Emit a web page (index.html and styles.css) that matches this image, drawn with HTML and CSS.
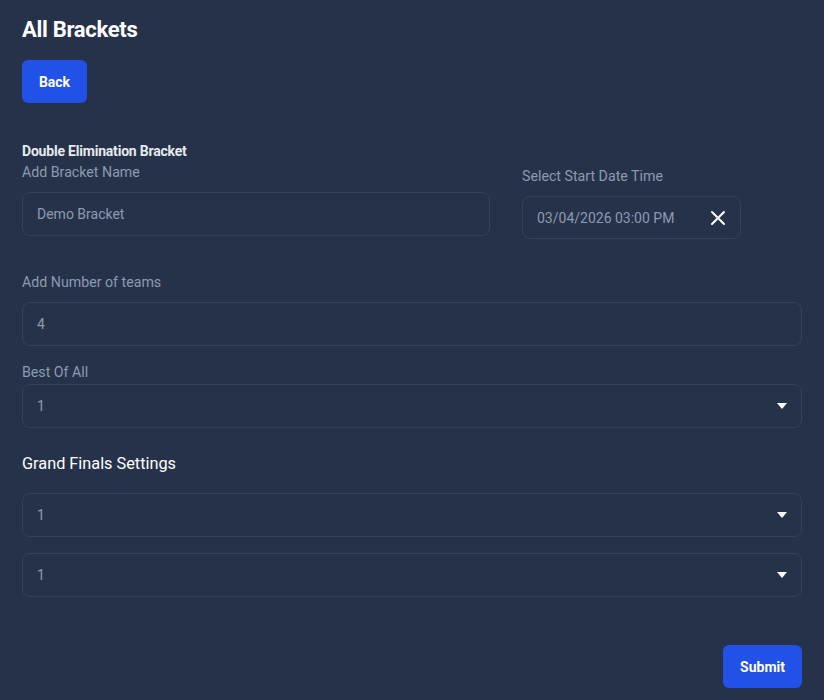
FILE: index.html
```html
<!DOCTYPE html>
<html>
<head>
<meta charset="utf-8">
<link rel="stylesheet" href="styles.css">
</head>
<body>
<div class="page">
  <h1 class="title">All Brackets</h1>
  <button class="btn btn-back">Back</button>

  <div class="row-top">
    <div class="col-left">
      <div class="section-title">Double Elimination Bracket</div>
      <label class="label">Add Bracket Name</label>
      <div class="field">Demo Bracket</div>
    </div>
    <div class="col-right">
      <label class="label">Select Start Date Time</label>
      <div class="field date-field">
        <span>03/04/2026 03:00 PM</span>
        <svg class="clear" width="16" height="16" viewBox="0 0 16 16"><path d="M2 2 L14 14 M14 2 L2 14" stroke="#ffffff" stroke-width="2" stroke-linecap="round"/></svg>
      </div>
    </div>
  </div>

  <div class="group teams">
    <label class="label">Add Number of teams</label>
    <div class="field">4</div>
  </div>

  <div class="group best">
    <label class="label label-tight">Best Of All</label>
    <div class="field select">
      <span>1</span>
      <svg width="10" height="6" viewBox="0 0 10 6"><path d="M0 0 L10 0 L5 6 Z" fill="#ffffff"/></svg>
    </div>
  </div>

  <h2 class="subtitle">Grand Finals Settings</h2>
  <div class="field select gf1">
    <span>1</span>
    <svg width="10" height="6" viewBox="0 0 10 6"><path d="M0 0 L10 0 L5 6 Z" fill="#ffffff"/></svg>
  </div>
  <div class="field select gf2">
    <span>1</span>
    <svg width="10" height="6" viewBox="0 0 10 6"><path d="M0 0 L10 0 L5 6 Z" fill="#ffffff"/></svg>
  </div>

  <div class="actions">
    <button class="btn btn-submit">Submit</button>
  </div>
</div>
</body>
</html>
```
FILE: styles.css
```css
* { box-sizing: border-box; }
html, body {
  margin: 0;
  padding: 0;
  background: #253249;
  font-family: Roboto, "Liberation Sans", sans-serif;
  height: 100%;
}
.page {
  padding: 16px 22px 12px 22px;
}
.title {
  margin: 0;
  font-size: 22px;
  font-weight: 700;
  color: #ffffff;
  line-height: 28px;
  letter-spacing: -0.3px;
}
.btn {
  border: none;
  background: #2151e6;
  color: #ffffff;
  font-family: Roboto, "Liberation Sans", sans-serif;
  font-weight: 700;
  font-size: 14px;
  border-radius: 6px;
  height: 43px;
  padding: 0 16px;
}
.btn-back {
  margin-top: 16px;
  width: 65px;
  display: block;
}
.row-top {
  display: flex;
  align-items: flex-end;
  gap: 32px;
  margin-top: 39px;
}
.col-left { width: 468px; }
.col-right { flex: 1; margin-bottom: -3px; }
.section-title {
  font-size: 14px;
  font-weight: 700;
  color: #e6eaf0;
  line-height: 18px;
  letter-spacing: -0.2px;
}
.label {
  display: block;
  font-size: 14.2px;
  color: #8d9bb1;
  line-height: 20px;
  margin-top: 2px;
  margin-bottom: 10px;
}
.label-tight { margin-bottom: 2px; }
.field {
  height: 44px;
  border: 1px solid #35435a;
  border-radius: 8px;
  display: flex;
  align-items: center;
  padding: 0 14px;
  font-size: 14px;
  color: #8d9bb1;
}
.date-field {
  width: 219px;
  height: 43px;
  justify-content: space-between;
  padding-right: 14px;
}
.teams { margin-top: 36px; }
.best { margin-top: 16px; }
.select {
  justify-content: space-between;
  padding-right: 14px;
}
.subtitle {
  margin: 24px 0 0 0;
  font-size: 16.3px;
  font-weight: 400;
  color: #ffffff;
  line-height: 24px;
}
.gf1 { margin-top: 17px; }
.gf2 { margin-top: 16px; }
.actions {
  display: flex;
  justify-content: flex-end;
  margin-top: 48px;
}
.btn-submit {
  width: 79px;
  padding: 0;
}
```
